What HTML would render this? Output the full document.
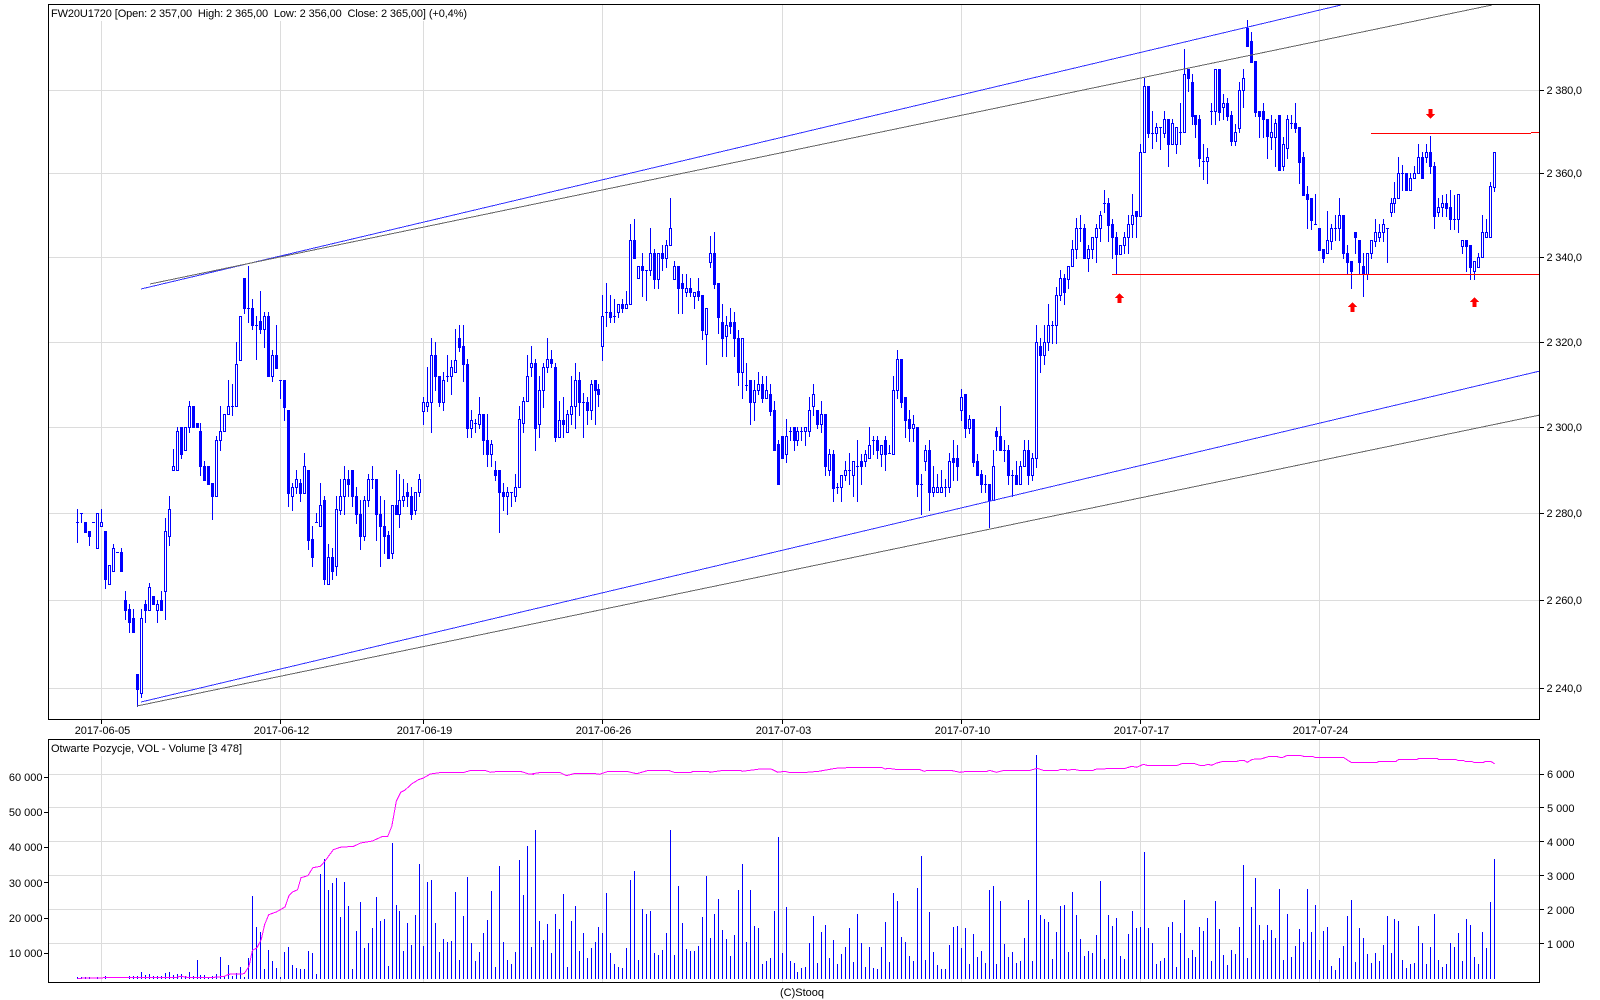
<!DOCTYPE html>
<html><head><meta charset="utf-8"><title>FW20U1720</title>
<style>
html,body{margin:0;padding:0;background:#fff;width:1600px;height:1000px;overflow:hidden}
svg{display:block;position:absolute;left:0;top:0}
text{font-family:"Liberation Sans",Arial,sans-serif;font-size:11px;fill:#000;white-space:pre}
</style></head><body>
<svg id="s" xmlns="http://www.w3.org/2000/svg" width="1600" height="1000" viewBox="0 0 1600 1000" shape-rendering="crispEdges">
<rect width="1600" height="1000" fill="#fff"/>
<g id="grid" fill="#dcdcdc"></g>
<rect x="50" y="5" width="418" height="16" fill="#fff"/>
<rect x="50" y="740" width="193" height="16" fill="#fff"/>
<path id="vol" fill="#0000ff"/>
<path id="mag" fill="none" stroke="#ff00ff" stroke-width="1"/>
<path id="cb" fill="#0000ff"/>
<path id="cw" fill="#ffffff"/>
<g stroke-width="1" fill="none">
<line x1="141" y1="289" x2="1341" y2="5" stroke="#3333ff"/>
<line x1="150" y1="284" x2="1492" y2="5" stroke="#666666"/>
<line x1="141" y1="702" x2="1540" y2="371" stroke="#3333ff"/>
<line x1="137" y1="706" x2="1540" y2="415" stroke="#666666"/>
<line x1="1112" y1="274.5" x2="1540" y2="274.5" stroke="#ff0000"/>
<line x1="1371" y1="133.5" x2="1531" y2="133.5" stroke="#ff0000"/>
<line x1="1531" y1="132.5" x2="1540" y2="132.5" stroke="#ff0000"/>
</g>
<g fill="#ff0000">
<polygon points="1119.5,293 1124,298 1121.5,298 1121.5,303 1117.5,303 1117.5,298 1115,298"/>
<polygon points="1352.5,302 1357,307 1354.5,307 1354.5,312 1350.5,312 1350.5,307 1348,307"/>
<polygon points="1474.5,297 1479,302 1476.5,302 1476.5,307 1472.5,307 1472.5,302 1470,302"/>
<polygon points="1430.5,119 1435,114 1432.5,114 1432.5,109 1428.5,109 1428.5,114 1426,114"/>
</g>
<g fill="none" stroke="#000" stroke-width="1">
<rect x="48.5" y="4.5" width="1491" height="715"/>
<rect x="48.5" y="739.5" width="1491" height="243"/>
</g>
<g id="ticks" fill="#000"></g>
<text x="51" y="17" textLength="416">FW20U1720 [Open: 2 357,00  High: 2 365,00  Low: 2 356,00  Close: 2 365,00] (+0,4%)</text>
<text x="51" y="752" textLength="191">Otwarte Pozycje, VOL - Volume [3 478]</text>
<text x="102.5" y="734" text-anchor="middle" textLength="55.5">2017-06-05</text>
<text x="281.5" y="734" text-anchor="middle" textLength="55.5">2017-06-12</text>
<text x="424.5" y="734" text-anchor="middle" textLength="55.5">2017-06-19</text>
<text x="603.5" y="734" text-anchor="middle" textLength="55.5">2017-06-26</text>
<text x="783.5" y="734" text-anchor="middle" textLength="55.5">2017-07-03</text>
<text x="962.5" y="734" text-anchor="middle" textLength="55.5">2017-07-10</text>
<text x="1141.5" y="734" text-anchor="middle" textLength="55.5">2017-07-17</text>
<text x="1320.5" y="734" text-anchor="middle" textLength="55.5">2017-07-24</text>
<text x="1546.5" y="94" textLength="35.5">2 380,0</text>
<text x="1546.5" y="177" textLength="35.5">2 360,0</text>
<text x="1546.5" y="261" textLength="35.5">2 340,0</text>
<text x="1546.5" y="346" textLength="35.5">2 320,0</text>
<text x="1546.5" y="431" textLength="35.5">2 300,0</text>
<text x="1546.5" y="517" textLength="35.5">2 280,0</text>
<text x="1546.5" y="604" textLength="35.5">2 260,0</text>
<text x="1546.5" y="692" textLength="35.5">2 240,0</text>
<text x="42.5" y="781" text-anchor="end">60 000</text>
<text x="42.5" y="816" text-anchor="end">50 000</text>
<text x="42.5" y="851" text-anchor="end">40 000</text>
<text x="42.5" y="887" text-anchor="end">30 000</text>
<text x="42.5" y="922" text-anchor="end">20 000</text>
<text x="42.5" y="957" text-anchor="end">10 000</text>
<text x="1547" y="778">6 000</text>
<text x="1547" y="812">5 000</text>
<text x="1547" y="846">4 000</text>
<text x="1547" y="880">3 000</text>
<text x="1547" y="914">2 000</text>
<text x="1547" y="948">1 000</text>
<text x="802" y="996" text-anchor="middle">(C)Stooq</text>
</svg>
<script>
var C="509 542 522 522 0,513 522 513 513 0,522 532 522 532 0,531 545 531 536 0,522 522 522 522 0,513 548 513 548 1,509 526 522 526 1,531 588 531 579 0,565 584 565 584 1,544 571 548 571 1,"+
"552 552 552 552 0,548 571 552 571 0,591 619 600 610 0,604 632 609 622 0,609 632 618 632 0,674 706 674 689 0,609 697 618 693 1,600 622 604 610 0,583 610 587 610 1,596 604 596 604 0,"+
"600 622 604 610 1,591 610 600 610 0,518 619 531 591 1,496 545 509 536 1,449 470 466 470 1,427 470 431 470 1,427 458 427 454 0,427 450 427 450 1,401 432 406 427 1,406 427 406 427 0,"+
"423 427 423 427 0,423 475 431 466 0,461 480 466 480 0,466 484 466 484 0,483 519 483 496 0,436 496 440 496 1,406 450 431 440 1,414 431 414 431 1,380 414 406 414 1,384 415 406 406 0,"+
"342 406 364 406 1,316 360 316 360 1,278 313 278 308 0,266 322 308 308 0,299 329 308 325 0,316 359 325 325 0,291 333 321 329 0,312 347 316 329 1,312 376 316 376 0,350 381 355 376 1,"+
"325 368 355 368 0,380 398 380 380 0,380 420 380 407 0,410 506 410 493 0,483 510 487 496 1,470 493 479 487 1,479 501 483 493 0,453 493 466 493 1,470 549 470 540 0,526 566 539 557 0,"+
"513 522 522 522 0,483 526 505 526 1,496 584 500 579 0,544 584 557 584 1,548 579 557 571 0,496 575 509 566 1,479 514 496 510 1,466 514 479 496 1,470 496 479 484 0,470 506 470 496 0,"+
"487 523 496 514 0,500 549 514 536 0,496 540 500 536 1,474 506 479 500 1,466 488 479 479 0,479 540 479 514 0,496 566 514 526 0,500 553 526 536 0,531 558 535 558 0,505 558 505 553 1,"+
"470 514 505 514 0,474 527 500 514 1,479 506 496 500 1,483 506 492 496 0,487 519 496 514 0,492 514 492 510 1,474 496 479 492 1,397 424 402 411 1,367 411 402 406 1,338 432 355 402 1,"+
"342 390 355 376 0,376 406 376 402 0,372 410 380 402 1,355 381 376 376 0,360 394 367 376 1,329 372 360 372 1,325 351 338 347 0,325 381 346 364 0,359 437 364 428 0,410 437 420 428 1,"+
"419 432 423 423 0,397 428 414 424 1,414 454 414 440 0,414 466 440 454 0,440 466 444 454 1,461 480 470 475 0,470 532 470 492 0,483 510 492 496 0,487 514 492 496 1,492 506 492 492 0,"+
"474 501 487 496 1,406 487 419 487 1,397 432 401 423 1,355 401 376 401 1,346 376 363 367 1,359 450 363 428 0,376 437 390 424 1,363 407 367 390 1,338 372 359 367 1,350 367 359 363 0,"+
"363 441 367 437 0,401 437 420 437 1,397 437 420 424 0,410 432 414 432 1,376 424 406 414 1,363 428 380 406 1,372 415 380 402 0,393 437 402 402 0,397 424 402 410 0,380 419 384 410 1,"+
"380 424 380 390 0,384 406 389 394 0,295 360 316 346 1,283 326 312 312 0,295 322 312 317 0,299 322 316 316 0,304 317 304 312 1,299 312 304 308 0,291 308 304 308 1,224 304 240 304 1,"+
"219 258 240 258 0,266 278 266 278 1,253 296 266 270 0,270 300 270 270 0,228 275 253 270 1,249 288 253 279 0,253 288 253 279 1,245 270 253 258 0,240 267 245 258 1,198 245 228 245 1,"+
"261 279 266 279 1,266 313 266 288 0,274 313 283 288 0,274 296 288 292 1,278 296 288 292 0,292 308 292 296 1,278 300 291 296 0,295 339 295 330 0,308 364 308 334 1,236 267 253 262 1,"+
"232 288 253 284 0,283 333 283 317 0,304 356 322 338 0,316 356 325 336 1,308 333 322 326 0,312 356 322 338 0,330 385 338 372 0,338 398 338 372 1,363 390 385 385 0,380 424 380 402 0,"+
"380 420 390 402 1,372 394 384 390 1,376 402 384 398 0,376 398 390 398 1,384 415 394 411 0,401 450 410 450 0,440 484 444 484 0,436 458 436 458 0,419 462 436 454 1,427 440 431 431 0,"+
"427 450 427 440 0,427 445 431 440 1,427 440 431 431 0,427 445 427 431 1,397 436 410 431 1,384 415 394 406 1,410 428 410 424 0,401 432 414 424 1,414 475 414 466 0,449 475 454 470 1,"+
"450 501 454 488 0,483 493 487 487 0,475 501 475 487 1,461 480 470 475 1,453 484 470 470 0,461 496 461 475 1,440 501 466 466 0,454 484 461 466 0,450 466 454 461 1,427 458 445 458 1,"+
"436 454 440 440 0,436 458 440 450 0,445 466 445 454 1,436 470 440 454 0,445 453 453 453 0,376 454 390 454 1,350 398 359 390 1,359 407 359 402 0,397 437 397 420 0,410 441 419 428 0,"+
"415 441 424 428 1,427 496 427 484 0,474 514 484 484 0,445 470 450 461 1,440 510 450 492 0,466 496 487 492 1,474 492 487 492 1,470 492 487 492 1,479 496 487 487 0,453 492 461 487 1,"+
"440 480 458 462 0,445 480 458 466 0,389 420 397 410 1,394 437 394 428 0,415 433 419 428 1,419 466 419 462 0,454 475 461 475 0,470 492 474 484 0,475 492 484 484 0,484 527 484 500 0,"+
"450 500 466 500 1,427 450 431 436 0,406 450 436 450 0,440 461 450 450 0,445 484 450 475 0,470 496 475 475 0,461 484 475 484 0,461 484 466 484 1,440 466 450 466 1,440 484 450 475 0,"+
"453 480 458 475 1,325 467 342 458 1,338 372 346 355 0,325 364 342 355 1,304 350 325 342 1,321 343 325 325 0,287 343 295 325 1,270 300 278 295 1,274 304 278 292 0,266 288 266 279 1,"+
"240 266 249 266 1,218 258 228 249 1,215 241 228 228 0,224 258 228 258 0,245 271 249 258 1,237 258 237 249 1,224 262 228 237 1,211 241 215 228 1,190 212 203 203 0,198 241 203 225 0,"+
"219 258 224 237 0,232 274 237 254 0,245 254 245 254 1,232 253 237 245 1,215 253 224 237 1,194 237 215 224 1,211 237 211 216 0,144 216 152 216 1,78 152 86 152 1,86 137 86 133 0,"+
"111 148 133 133 0,123 141 127 133 1,127 149 127 127 0,111 137 119 133 1,119 166 119 144 0,119 144 123 144 1,127 153 127 144 1,103 144 132 132 0,49 132 74 132 1,69 91 69 78 0,"+
"74 124 82 116 0,115 137 115 124 0,115 166 119 158 0,144 179 161 161 0,148 183 157 161 1,103 124 111 111 0,69 124 69 111 1,69 120 69 112 0,94 119 103 107 1,98 120 103 116 0,"+
"111 145 115 141 0,124 145 132 141 1,82 132 90 128 1,69 107 78 90 1,20 46 28 46 0,32 62 41 62 0,61 116 61 112 0,111 137 111 116 0,103 137 111 119 0,119 158 119 136 0,"+
"115 149 132 137 1,119 166 123 137 1,115 170 115 170 0,137 170 144 166 1,115 158 119 148 1,115 128 123 123 0,103 132 123 128 0,127 183 127 162 0,152 195 157 195 0,186 228 194 199 0,"+
"198 229 198 220 0,194 224 224 224 0,228 250 228 250 0,249 262 249 258 0,211 253 240 253 1,224 249 228 241 1,215 240 228 228 0,198 240 215 228 1,215 258 215 253 0,245 274 253 262 0,"+
"261 288 261 271 0,232 253 232 237 0,240 274 240 262 0,253 296 266 274 0,253 279 253 274 1,240 258 240 253 1,219 246 232 241 1,224 241 232 237 1,219 241 224 232 1,228 262 228 228 0,"+
"198 216 203 212 1,182 212 198 203 1,157 198 173 198 1,165 190 173 173 0,173 190 173 190 0,173 190 178 190 1,166 178 173 178 1,144 173 157 173 1,152 178 157 178 0,144 162 152 157 1,"+
"136 173 152 166 0,162 228 166 216 0,198 216 207 212 1,195 216 203 207 1,194 216 203 208 0,190 229 207 219 0,195 229 219 219 0,194 232 194 219 1,240 253 240 246 1,240 271 240 246 0,"+
"245 279 245 267 0,261 279 261 271 1,253 267 257 267 1,215 257 232 257 1,219 237 232 237 1,182 237 186 237 1,152 191 152 187 1";
var V0=[732,732,732,732,736,732,735,729,736,735,735,735,735,729,729,729,717,726,723,730,730,729,720,717,726,723,723,729,717,729,681,726,726,733,729,723,672,729,696,729,720,702,732,675,490,582,597,708,651,684,705,732,657,642,696,705,708,708,654,660,723,423,378,471,450,435,552,447,519,708,594,507,645,630,585,492,564,558,699,330,516,534,654,570,636,546,393,639,447,441,570,657,618,627,624,477,681,549,432,630,684,657,600,561,474,702,399,627,681,693,657,381,486,339,642];
var V1=[291,564,621,573,660,543,588,483,702,564,519,654,600,675,645,627,582,600,480,660,693,702,705,645,441,414,681,528,543,534,660,666,651,600,291,666,459,570,648,654,654,639,552,429,615,543,498,591,618,669,606,471,393,627,471,579,585,693,684,675,534,312,660,522,684,690,717,705,702,630,549,690,597,576,675,621,693,663,642,585,687,543,630,702,642,705,708,642,567,687,480,504,612,627,669,684,465,369,681,537,657,696,708,708,636,582,579,645,585,693,603,672,654,690,471,459,693,504,633,672,657,690,684,615,501,684,66,546,558,567,678,597,519,516];
var V2=[657,477,546,618,669,654,660,606,444,678,546,579,555,669,678,603,534,585,582,357,585,630,693,684,675,582,567,702,600,501,675,651,672,582,594,555,684,504,588,666,696,651,663,582,396,675,522,435,576,621,576,591,615,468,681,543,672,639,588,627,468,597,516,681,594,582,699,711,675,639,549,501,687,585,615,663,690,660,684,636,549,660,558,564,681,705,693,690,579,630,693,642,543,681,702,693,630,642,600,684,558,576,672,693,597,645,507,378];
var M=[[0,228,736,300,735,310,733,520,733,530,730,550,733,630,733,660,730,672,724,718,722,732,700,742,652,755,645,768,620,778,575,790,545,812,537,838,522,850,487,860,477,875,470,885,434,905,428,920,404,942,400,955,385,980,350,1000,343,1040,340,1060,330,1095,324,1125,310,1140,310,1152,280,1165,205,1178,178,1190,172,1210,153,1230,140,1245,135,1265,123,1300,118,1365,118,1385,112,1425,112,1443,118,1465,115,1530,115,1555,123,1568,124],
[533,0,122,25,118,78,118,98,128,120,122,185,122,195,124,222,115,275,115,305,122,340,112,398,112,415,118,465,118,470,115,515,115,520,118,560,112,610,112,615,115,668,108,700,108,720,118,740,115,752,118,805,118,840,115,890,106,945,103,1025,103,1035,108,1045,106,1065,109,1135,109,1150,115,1160,112,1228,112,1255,118,1278,115,1335,115,1342,112,1362,118,1385,112,1462,112,1482,106,1500,112,1545,112,1550,109,1568,109],
[1067,0,112,20,109,35,112,78,112,82,109,140,106,172,106,190,100,205,103,225,94,235,97,325,97,340,91,372,91,390,97,405,97,415,94,425,97,440,90,460,85,500,85,510,82,520,82,530,88,545,79,570,78,595,70,615,70,625,73,635,73,648,67,685,67,695,70,722,70,728,73,812,73,835,88,912,88,918,85,968,85,975,79,1030,79,1035,76,1088,76,1092,79,1143,79,1148,82,1165,82,1170,85,1190,85,1195,88,1225,88,1230,85,1245,85,1257,92]];
function X(i){return Math.floor(77.6+3.98*i)}
var b="",w="";
C.split(",").forEach(function(r,i){
 var a=r.split(" ").map(Number),x=X(i),hi=Math.min(a[0],a[2]),lo=Math.max(a[1],a[3]),t=a[2],e=a[3];
 if(lo>hi)b+="M"+x+" "+hi+"h1V"+(lo+1)+"h-1z";
 b+="M"+(x-1)+" "+t+"h3V"+(e+1)+"h-3z";
 if(a[4]&&e-t>=2)w+="M"+x+" "+(t+1)+"h1V"+e+"h-1z";
});
document.getElementById("cb").setAttribute("d",b);
document.getElementById("cw").setAttribute("d",w);
var v="";
function addV(arr,s){arr.forEach(function(z,k){var y=Math.round(733+z/3),x=X(s+k);if(y<978)v+="M"+x+" "+y+"h1V979h-1z";})}
addV(V0,0);addV(V1,115);addV(V2,249);
document.getElementById("vol").setAttribute("d",v);
var m="";
M.forEach(function(s){for(var k=1;k<s.length;k+=2){m+=(m?"L":"M")+(s[0]+s[k]/2.94).toFixed(1)+" "+(733+s[k+1]/3).toFixed(1)}});
document.getElementById("mag").setAttribute("d",m);
var g="",tk="";
[101,280,423,602,782,961,1140,1319].forEach(function(x){
 g+='<rect x="'+x+'" y="5" width="1" height="715"/><rect x="'+x+'" y="740" width="1" height="242"/>';
 tk+='<rect x="'+x+'" y="720" width="1" height="4"/>';
});
[90,173,257,342,427,513,600,688,774,807,841,875,909,943].forEach(function(y){
 g+='<rect x="49" y="'+y+'" width="1490" height="1"/>';
 tk+='<rect x="1540" y="'+y+'" width="4" height="1"/>';
});
[777,812,847,882,918,953].forEach(function(y){tk+='<rect x="44" y="'+y+'" width="4" height="1"/>';});
document.getElementById("grid").innerHTML=g;
document.getElementById("ticks").innerHTML=tk;
</script>
</body></html>
